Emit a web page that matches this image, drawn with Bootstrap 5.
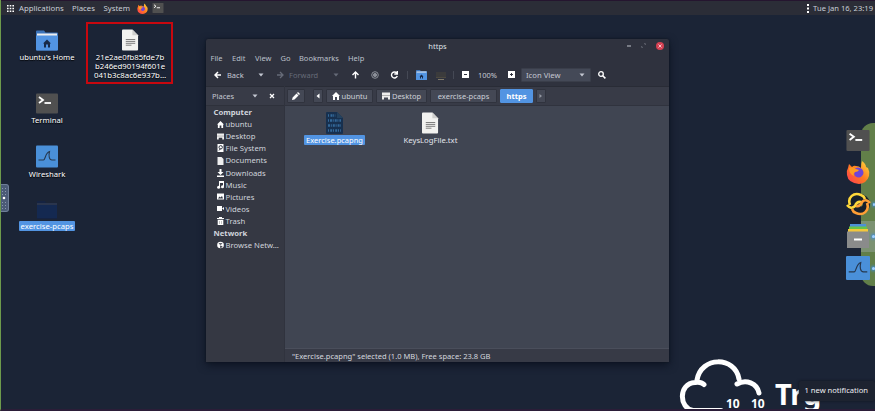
<!DOCTYPE html>
<html lang="en">
<head>
<meta charset="utf-8">
<meta name="viewport" content="width=device-width, initial-scale=1">
<title>Desktop</title>
<link href="https://cdn.jsdelivr.net/npm/bootstrap@5.3.0/dist/css/bootstrap.min.css" rel="stylesheet">
<style>
body{width:875px;height:411px;overflow:hidden;background:#1b2436;color:#dfe2e8;font:7.5px/12px "Noto Sans","Open Sans",sans-serif;white-space:nowrap}
svg{display:block;flex:none}
.desk{width:875px;height:411px;background:#1b2436}
.edge{left:0;top:0;width:875px;height:411px;border-left:1px solid #6d9a4c;border-bottom:2px solid #2b1d38;pointer-events:none}
.topbar{height:15px;background:#2b2d37;border-top:1px solid #25152f;padding:0 2px 0 7px;color:#c9cdd6;font-size:7.8px}
.topbar .apps{width:65px;padding-left:5px}
.topbar .places{width:31.5px;margin-left:-7px}
.topbar .system{width:29px}
.topbar .clock{font-size:7.6px}
.spot{position:absolute;text-align:center;color:#fff;text-shadow:0 1px 1px #000}
.spot svg{margin:0 auto}
.home{left:7px;top:30px;width:80px;font-size:7.6px}
.longfile{left:86px;top:22px;width:87px;height:62px;border:2px solid #c8080f;padding:5px 0 0 1px;line-height:9px;font-size:7.8px}
.longfile div{padding-top:2px}
.term{left:7px;top:93px;width:80px;font-size:7.7px}
.wire{left:7px;top:145px;width:80px;font-size:7.7px}
.pcaps{left:7px;top:200px;width:80px;font-size:7.7px}
.picked{display:inline-block;background:#5294e2;border-radius:1px;line-height:10px;padding:0 2px;color:#fff;text-shadow:none}
.handle{left:0;top:184px;width:9px;height:28px;background:#4b5b77;border:1px solid #6f7e98;border-left:0;border-radius:0 3px 3px 0}
.fm{left:206px;top:39px;width:463px;height:323px;background:#2f323e;box-shadow:0 3px 9px #0c1220,0 0 2px #10141e;border-radius:2px 2px 0 0}
.title{height:13px;padding-right:5px;padding-left:52px;gap:10px}
.menus{display:grid;grid-template-columns:21.5px 23px 25.5px 18.5px 49px 30px;height:12px;padding-left:4.5px;color:#bcc1cb}
.tools{height:22px;color:#c4c8d2;padding:0 0 1px 8px}
.tools .bk{width:31px;margin-left:6px}
.tools .fw{width:44px;margin-left:5px}
.tools .zm{width:20px;margin:0 10px 0 9px}
.dim{color:#666b78}
.bar1{width:1px;height:8px;background:#454955}
.viewsel{width:70px;height:14px;background:#444957;border:1px solid #3a3e4a;border-radius:1px;padding:0 5px 0 4px;margin:0 7px 0 6px;font-size:7.7px}
.side{width:79px;background:#353843;border-right:1px solid #30333e}
.sidehead{height:20px;padding:0 8px 0 6px;background:#383b47;border-top:1px solid #292c36;border-bottom:1px solid #2e313b;color:#c4c8d2}
.sidelist{padding-left:7.5px;color:#d0d4dc;font-size:7.7px;line-height:12.15px}
.sidelist .it{padding-left:3.5px;gap:1.5px;height:12.12px}
.paths{height:20px;background:#383b47;border-top:1px solid #292c36;border-bottom:1px solid #30333e;padding-left:2px;gap:3px}
.crumb{height:14px;background:#444855;border:1px solid #30333e;border-radius:1px;color:#ccd0d8;gap:2px}
.crumb.on{background:#5294e2;border-color:#5294e2;color:#fff;font-weight:700}
.w10{width:10px}.w18{width:18px;margin-right:5px}.w33{width:33px}.w47{width:47px}.w51{width:51px}.w67{width:67px}
.files{background:#404552;color:#e1e4ea;padding-left:1.5px}
.fileitem{width:96px;text-align:center;padding-top:6px}
.fileitem svg{margin:0 auto}
.fileitem:last-child{font-size:7.7px}
.status{height:14px;background:#373a46;border-top:1px solid #4a4e5b;padding-left:7px;color:#d4d7de;font-size:7.55px}
.dock{left:846px;top:123px;width:29px;height:163px}
.dockbg{left:15px;top:0;width:14px;height:163px;background:#627f49;border-radius:12px 0 0 12px;overflow:hidden}
.dockbg i{display:block;margin-top:98px;height:31px;background:#7c9272}
.docklist{gap:8px;padding-top:5px}
.docklist>div{height:24px}
.docklist .live::after{content:"";width:3px;height:3px;border-radius:50%;background:#a4d2ff;box-shadow:0 0 3px 1px #398ee8;margin-left:2px}
.cloud{left:675px;top:355px}
.cloud text{font:700 12px "Noto Sans","Open Sans",sans-serif;fill:#fff}
.brand{left:775px;top:374px;font:700 29px/40px "Noto Sans","Open Sans",sans-serif;color:#fff;height:37px}
.notice{left:799px;top:381px;width:76px;height:20px;background:#1d2330;border-radius:2px;color:#f0f1f4;line-height:19px;padding-left:5.500px;font-size:7.6px;box-shadow:0 0 3px #10141e}
</style>
<script src="https://cdn.jsdelivr.net/npm/bootstrap@5.3.0/dist/js/bootstrap.bundle.min.js"></script>
</head>
<body>
<svg width="0" height="0" class="position-absolute">
<defs>
<linearGradient id="fx" x1="0" y1="1" x2="1" y2="0"><stop stop-color="#ff3657"/><stop offset=".5" stop-color="#ff7a20"/><stop offset="1" stop-color="#ffe23e"/></linearGradient>
<symbol id="fire" viewBox="0 0 24 24"><path fill="url(#fx)" d="M2 8 3 4l3 3q2-2 4-1 3 0 5 2 0-4 1-7 4 3 4 6l2 1q2 4 1 8-2 7-10 8Q2 23 1 15q-1-4 1-7z"/><path fill="#6f45d8" d="M8 9q4-3 8 0 3 4 0 7-3 3-7 0-2-3 1-5z"/><path fill="#ff9b21" d="M3 8q4-2 7 1l3 1q-1 2-4 2-2 1-1 4-5-2-5-8z"/></symbol>
<symbol id="tm" viewBox="0 0 22 20"><rect width="22" height="20" rx="1" fill="#505050"/><path d="M3 3.500 7 6.500 3 9.500" stroke="#fff" stroke-width="1.800" fill="none"/><path d="M8.500 9.500H15" stroke="#fff" stroke-width="1.800"/></symbol>
<symbol id="ws" viewBox="0 0 22 22"><rect width="22" height="22" rx="1" fill="#4a90d9"/><path d="M2.500 14.500h5c2 0 1.500-7 6-8.500-1 4-.5 8.500 2.500 8.500h3.500" fill="none" stroke="#26384f" stroke-width="1.100"/></symbol>
<symbol id="doc" viewBox="0 0 18 22"><path d="M1 0h10l6 6v15q0 1-1 1H1q-1 0-1-1V1q0-1 1-1z" fill="#f2f2f0"/><path d="M11 0v6h6z" fill="#cfcfcd"/><path d="M4 10.500h10M4 12.500h10M4 14.500h10M4 16.500h6" stroke="#777" stroke-width="1"/></symbol>
<symbol id="fold" viewBox="0 0 22 20"><path d="M1 0h7l1.500 2H21q1 0 1 1v16q0 1-1 1H1q-1 0-1-1V1q0-1 1-1z" fill="#3b73b9"/><path d="M1 3h20v3H1z" fill="#eee"/><path d="M0 5h22v14q0 1-1 1H1q-1 0-1-1z" fill="#5294e2"/><path d="m11 9-4 4h1v4h2v-3h2v3h2v-4h1z" fill="#182b49"/></symbol>
<symbol id="hm" viewBox="0 0 8 8"><path d="M4 0 0 4h1v4h2V5h2v3h2V4h1z" fill="#fff"/></symbol>
<symbol id="dt" viewBox="0 0 8 8"><path d="M0 .5h8v5H0zM0 5.500h2v2H0zM6 5.500h2v2H6z" fill="#eee"/><path d="M0 3.500h8" stroke="#888" stroke-width=".6"/></symbol>
<symbol id="dn" viewBox="0 0 6 4"><path d="M.5.500h5L3 3.500z" fill="currentColor"/></symbol>
</defs>
</svg>
<main class="desk position-relative overflow-hidden">
<header class="topbar d-flex align-items-center">
<svg width="7" height="7" viewBox="0 0 7 7" fill="#fff"><path d="M0 0h1.600v1.600H0zM2.700 0h1.600v1.600H2.700zM5.400 0H7v1.600H5.400zM0 2.700h1.600v1.600H0zM2.700 2.700h1.600v1.600H2.700zM5.400 2.700H7v1.600H5.400zM0 5.400h1.600V7H0zM2.700 5.400h1.600V7H2.700zM5.400 5.400H7V7H5.400z"/></svg>
<span class="apps">Applications</span><span class="places">Places</span><span class="system">System</span>
<svg class="ms-1" width="11" height="11"><use href="#fire"/></svg>
<svg class="ms-1" width="12" height="10"><use href="#tm"/></svg>
<svg class="ms-auto" width="2" height="9" fill="#fff"><path d="M0 0h2v2H0zM0 3.500h2v2H0zM0 7h2v2H0z"/></svg>
<span class="ms-1 clock">Tue Jan 16, 23:19</span>
</header>

<div class="spot home"><svg width="22" height="21"><use href="#fold"/></svg>ubuntu's Home</div>
<div class="spot longfile"><svg width="17" height="22"><use href="#doc"/></svg><div>21e2ae0fb85fde7b<br>b246ed90194f601e<br>041b3c8ac6e937b…</div></div>
<div class="spot term"><svg width="22" height="21"><use href="#tm"/></svg>Terminal</div>
<div class="spot wire"><svg width="22" height="23"><use href="#ws"/></svg>Wireshark</div>
<div class="spot pcaps"><svg width="22" height="20" viewBox="0 0 22 20"><path d="M1 1h8l1 2h11v16H1z" fill="#152342"/><path d="M1 4h20" stroke="#414958"/><path d="M1 5h20v13H1z" fill="#142951"/></svg><span class="picked">exercise-pcaps</span></div>
<div class="handle position-absolute"><svg width="8" height="26"><path fill="#8b98ae" d="M2 3h1v1H2zM5 3h1v1H5zM2 6h1v1H2zM5 6h1v1H5zM2 9h1v1H2zM5 9h1v1H5zM2 17h1v1H2zM5 17h1v1H5zM2 20h1v1H2zM5 20h1v1H5zM2 23h1v1H2zM5 23h1v1H5z"/><circle cx="4" cy="13" r="1.300" fill="#fff"/></svg></div>

<section class="fm position-absolute d-flex flex-column">
<div class="title d-flex align-items-center"><span class="flex-fill text-center">https</span>
<svg width="4" height="4"><path d="M0 2h4" stroke="#c2c5cc"/></svg>
<svg width="5" height="5" viewBox="0 0 5 5" fill="#9a9ea8"><path d="M3 .5h1.500V2zM.5 3v1.500H2z"/></svg>
<svg class="ms-n1" width="8" height="8" viewBox="0 0 8 8"><circle cx="4" cy="4" r="4" fill="#d44052"/><path d="m2.500 2.500 3 3m0-3-3 3" stroke="#f5c5ca"/></svg></div>
<nav class="menus align-items-center"><span>File</span><span>Edit</span><span>View</span><span>Go</span><span>Bookmarks</span><span>Help</span></nav>
<div class="tools d-flex align-items-center">
<svg width="7" height="8" viewBox="0 0 7 8" fill="none" stroke="#fff" stroke-width="1.500"><path d="M7 4H1m3-3L1 4l3 3"/></svg><span class="bk">Back</span>
<svg width="6" height="4"><use href="#dn"/></svg>
<svg class="dim" width="20" height="8" viewBox="-13 0 20 8" fill="none" stroke="currentColor" stroke-width="1.300"><path d="M0 4h6M3 1l3 3-3 3"/></svg><span class="fw dim">Forward</span>
<svg class="dim" width="6" height="4"><use href="#dn"/></svg>
<svg width="60" height="10" viewBox="1.500 0 60 10" fill="none" stroke="#fff" stroke-width="1.400"><path d="M18 8.500V2M15 5l3-3 3 3"/><g stroke="#8b8f98" stroke-width="1"><circle cx="37.500" cy="5" r="3.300"/><circle cx="37.500" cy="5" r="1.600" fill="#8b8f98"/></g><path d="M59.300 3a3 3 0 1 0 .5 3M59.800 1v3h-3"/></svg>
<span class="bar1 ms-2 me-1"></span>
<svg width="11" height="10" class="ms-1"><use href="#fold"/></svg>
<svg width="22" height="10"><path d="M9 2h10v6H9z" fill="#3b3b3c"/><path d="M9 7.500h10" stroke="#4c4940"/><path d="M11 9.500h6" stroke="#807a6b"/></svg>
<span class="bar1 ms-1"></span>
<svg class="ms-2" width="7" height="7"><path d="M0 0h7v7H0z" fill="#fff"/><path d="M2 3.500h3" stroke="#2f323e"/></svg>
<span class="zm">100%</span>
<svg width="7" height="7"><path d="M0 0h7v7H0z" fill="#fff"/><path d="M2 3.500h3M3.500 2v3" stroke="#2f323e"/></svg>
<span class="viewsel d-flex align-items-center justify-content-between">Icon View<svg width="6" height="4"><use href="#dn"/></svg></span>
<svg width="8" height="8" fill="none" stroke="#fff" stroke-width="1.300"><circle cx="3" cy="3" r="2.300"/><path d="m4.700 4.700 2.700 2.700" stroke-width="1.600"/></svg>
</div>
<div class="d-flex flex-fill">
<aside class="side">
<div class="sidehead d-flex align-items-center"><span>Places</span><svg class="ms-auto" width="6" height="4"><use href="#dn"/></svg><svg class="ms-1" width="14" height="6" viewBox="-7 0 14 6" stroke="#fff" stroke-width="1.300"><path d="m1 1 4 4m0-4L1 5"/></svg></div>
<div class="sidelist">
<div class="fw-bold">Computer</div>
<div class="it d-flex align-items-center"><svg width="7" height="7"><use href="#hm"/></svg>ubuntu</div>
<div class="it d-flex align-items-center"><svg width="7" height="7"><use href="#dt"/></svg>Desktop</div>
<div class="it d-flex align-items-center"><svg width="7" height="8" viewBox="0 0 7 8"><path d="M.5 0h6v8h-6z" fill="#fff"/><circle cx="3.700" cy="3.300" r="1.700" fill="none" stroke="#353843"/><path d="m2 6.500 1.500-2" stroke="#353843"/></svg>File System</div>
<div class="it d-flex align-items-center"><svg width="7" height="8"><path d="M.5 0h4l2 2v6h-6z" fill="#eee"/></svg>Documents</div>
<div class="it d-flex align-items-center"><svg width="7" height="8" fill="#fff"><path d="M2.500 0h2v3h2l-3 3-3-3h2zM0 6.500h7V8H0z"/></svg>Downloads</div>
<div class="it d-flex align-items-center"><svg width="7" height="8" viewBox="0 0 7 8" fill="#fff"><path d="M2 0h5v5.500H6V2H3v4.500H2z"/><circle cx="1.600" cy="6.300" r="1.500"/><circle cx="5.500" cy="5.700" r="1.500"/></svg>Music</div>
<div class="it d-flex align-items-center"><svg width="7" height="7"><path d="M0 .5h7v6H0z" fill="#fff"/><path d="m1 5.500 1.500-2 1 1L5 3l1 2.500z" fill="#353843"/></svg>Pictures</div>
<div class="it d-flex align-items-center"><svg width="7" height="7" fill="#fff"><path d="M0 1h5v5H0zM5 3.500 7.500 1.500v4z"/></svg>Videos</div>
<div class="it d-flex align-items-center"><svg width="7" height="8" fill="#fff"><path d="M0 1h2V0h3v1h2v1H0zM.7 2.700h5.600V8H.7z"/><path d="M2.500 4v3M4.500 4v3" stroke="#999" stroke-width=".6"/></svg>Trash</div>
<div class="fw-bold">Network</div>
<div class="it d-flex align-items-center"><svg width="7" height="8" viewBox="0 0 8 8"><circle cx="4" cy="4" r="3.800" fill="#fff"/><path d="m2 2 2 1.500L6 2M4 5l2 1-2 1z" stroke="#353843" fill="#353843" stroke-width=".8"/></svg>Browse Netw…</div>
</div>
</aside>
<div class="d-flex flex-column flex-fill">
<div class="paths d-flex align-items-center">
<span class="crumb w18 d-flex align-items-center justify-content-center"><svg width="8" height="8" fill="#fff"><path d="m0 8 .6-2.500L4.500 1.500l2 2L2.500 7.500zM5 1l1-1 2 2-1 1z"/></svg></span>
<span class="crumb w10 d-flex align-items-center justify-content-center"><svg width="4" height="6"><path d="M3.500.500v5L.5 3z" fill="#fff"/></svg></span>
<span class="crumb w47 d-flex align-items-center justify-content-center"><svg width="8" height="8"><use href="#hm"/></svg>ubuntu</span>
<span class="crumb w51 d-flex align-items-center justify-content-center"><svg width="8" height="8"><use href="#dt"/></svg>Desktop</span>
<span class="crumb w67 d-flex align-items-center justify-content-center">exercise-pcaps</span>
<span class="crumb on w33 d-flex align-items-center justify-content-center">https</span>
<span class="crumb w10 d-flex align-items-center justify-content-center"><svg width="4" height="6"><path d="M.5 1v4L3 3z" fill="#9599a3"/></svg></span>
</div>
<div class="files d-flex flex-fill">
<div class="fileitem"><svg width="17" height="22" viewBox="0 0 17 22"><path d="M1 0h10l6 6v15q0 1-1 1H1q-1 0-1-1V1q0-1 1-1z" fill="#17304f"/><path d="M11 0v6h6z" fill="#24425f"/><g stroke="#34699a" stroke-width="2.600"><path d="M2 3.500h8" stroke-dasharray="1 1.500 2 .7"/><path d="M2 8.500h13" stroke-dasharray="1 1 2 .7"/><path d="M2 13.500h13" stroke-dasharray="2 .8 1 1"/><path d="M2 18.500h13" stroke-dasharray="1 1.200 2 .8"/></g></svg><span class="picked">Exercise.pcapng</span></div>
<div class="fileitem"><svg width="17" height="22"><use href="#doc"/></svg>KeysLogFile.txt</div>
</div>
<div class="status d-flex align-items-center">"Exercise.pcapng" selected (1.0 MB), Free space: 23.8 GB</div>
</div>
</div>
</section>

<aside class="dock position-absolute">
<div class="dockbg position-absolute"><i></i></div>
<div class="docklist position-relative d-flex flex-column">
<div class="d-flex align-items-center"><svg width="24" height="21"><use href="#tm"/></svg></div>
<div class="d-flex align-items-center"><svg width="24" height="24"><use href="#fire"/></svg></div>
<div class="live d-flex align-items-center"><svg width="25" height="24" viewBox="0 0 25 24" fill="none"><ellipse cx="12.500" cy="12" rx="8" ry="7" stroke="#17202c" stroke-width="7"/><path d="M4 13C1 5 8 0 15 3q3 1 4 4M1 13q4 5 8 1 2-5 6-4" stroke="#ffd83b" stroke-width="2.600"/><path d="M21 11c3 8-4 13-11 10q-3-1-4-4M24 11q-4-5-8-1-2 5-6 4" stroke="#ff9e35" stroke-width="2.600"/></svg></div>
<div class="live d-flex align-items-center"><svg width="24" height="24" viewBox="0 0 24 24"><path d="M4 0h16v4H4z" fill="#4d91d8"/><path d="M3 2.500h18V6H3z" fill="#68c447"/><path d="M2 5h20v4H2z" fill="#f3c73c"/><path d="M1 7.500h22V24H1z" fill="#8a8b8b"/><path d="M8 15.500h8" stroke="#fff" stroke-width="2"/></svg></div>
<div class="live d-flex align-items-center"><svg width="24" height="24"><use href="#ws"/></svg></div>
</div>
</aside>

<svg class="cloud position-absolute" width="96" height="56" viewBox="675 355 96 56" fill="none" stroke="#fff" stroke-width="5" stroke-linecap="round"><path d="M721 410.500h-28c-14-2-15-27 2-28q6-1 9 2M697 380c4-24 38-24 42-1M737 384c9-5 20-1 22 9"/><g stroke="none"><text x="726" y="408">10</text><text x="751" y="408">10</text></g></svg>
<div class="brand position-absolute">Trg</div>
<div class="notice position-absolute">1 new notification</div>
<div class="edge position-absolute"></div>
</main>
</body>
</html>
